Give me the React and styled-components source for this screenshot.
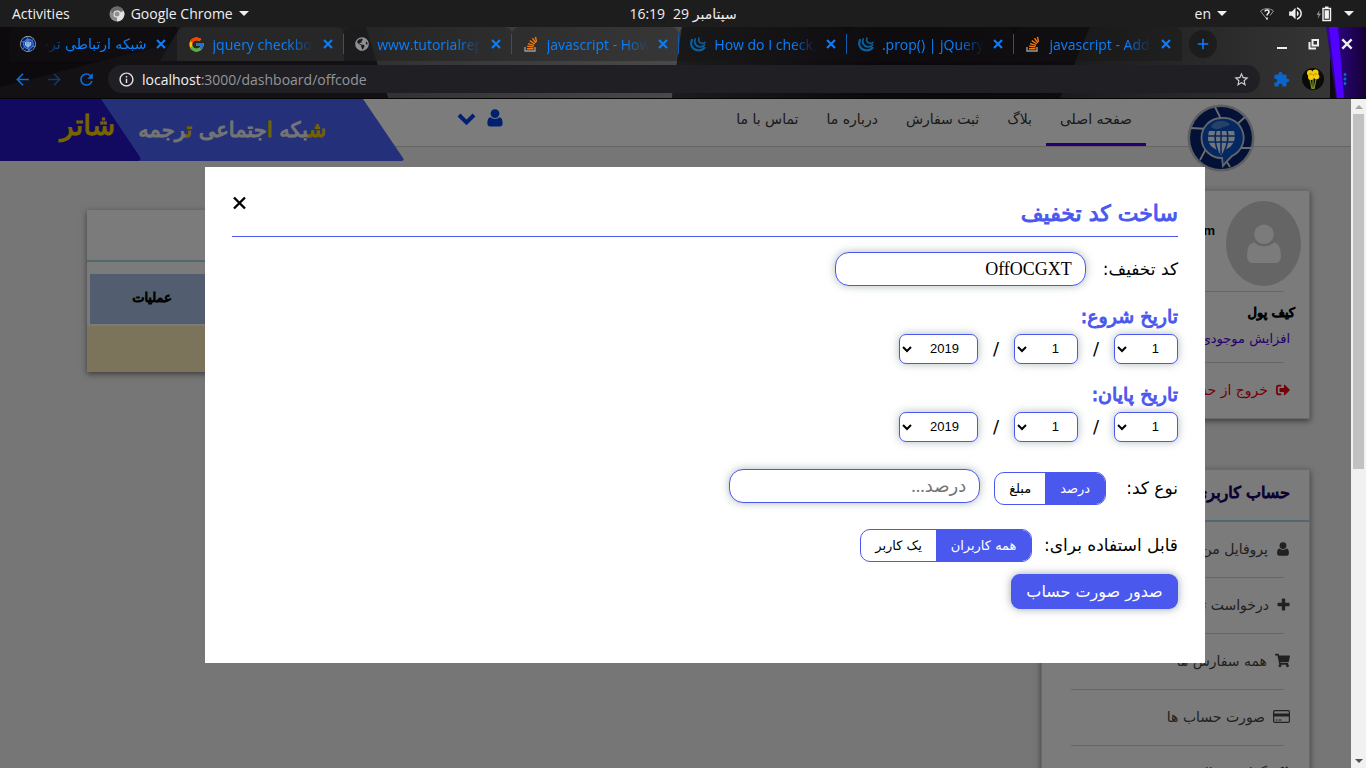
import React from "react";
import styled, { createGlobalStyle, css } from "styled-components";
import {
  MdArrowBack,
  MdArrowForward,
  MdRefresh,
  MdInfoOutline,
  MdStarBorder,
  MdExtension,
  MdMoreVert,
  MdAdd,
  MdVolumeUp,
} from "react-icons/md";
import { FcGoogle } from "react-icons/fc";
import { FaGlobeAmericas, FaShoppingCart, FaSignOutAlt, FaHome } from "react-icons/fa";

const uiFont = `"Open Sans", "Noto Sans", "DejaVu Sans", sans-serif`;
const faFont = `"DejaVu Sans", sans-serif`;
const accent = "#4b58ee";

const GlobalStyle = createGlobalStyle`
  * { box-sizing: border-box; }
  body { margin: 0; background: #1d1d1d; }
  button, input, select { margin: 0; }
  h1, h2, h3, p, ul { margin: 0; padding: 0; }
  a { color: inherit; text-decoration: none; }
`;

/* Medium-heavy Persian headings: regular outlines thickened by a stroke. */
const heavy = css`
  font-weight: 400;
  -webkit-text-stroke: 1px currentColor;
`;

const Screen = styled.div`
  display: flex;
  flex-direction: column;
  height: 100vh;
  overflow: hidden;
  font-family: ${uiFont};
`;

/* ---------- desktop bar ---------- */

const DesktopBar = styled.header`
  display: grid;
  grid-template-columns: 1fr auto 1fr;
  align-items: center;
  height: 27px;
  flex: none;
  padding: 0 12px;
  background: #1d1d1d;
  color: #efefef;
  font-size: 14px;
`;

const BarGroup = styled.div`
  display: flex;
  align-items: center;
  justify-content: ${(p) => (p.$end ? "flex-end" : "flex-start")};
  gap: ${(p) => p.$gap}px;
`;

const BarButton = styled.button`
  display: flex;
  align-items: center;
  gap: 6px;
  padding: 0;
  border: 0;
  background: none;
  color: inherit;
  font: inherit;
`;

const Caret = styled.span`
  border: 5px solid transparent;
  border-top-color: currentColor;
  border-bottom-width: 0;
`;

/* ---------- browser window ---------- */

const Chrome = styled.div`
  position: relative;
  flex: none;
  height: 72px;
  background: #0d0a0d;
  border-bottom: 1px solid #050505;
`;

const ThemeArt = styled.svg`
  position: absolute;
  inset: 0;
  width: 100%;
  height: 100%;
`;

const TabStrip = styled.div`
  position: relative;
  display: flex;
  height: 34px;
  padding-left: 9px;
`;

const Tabs = styled.div`
  display: flex;
  flex: 1;
  min-width: 0;
`;

const Tab = styled.div`
  position: relative;
  display: flex;
  align-items: center;
  flex: 1;
  min-width: 0;
  gap: 8px;
  padding: 0 10px 0 11px;
  color: #0a80ff;
  font-size: 14px;
  border-radius: 8px 8px 0 0;
  background: ${(p) => (p.$active ? "rgba(255,255,255,.03)" : "rgba(20,20,22,.35)")};

  svg { flex: none; }
`;

const TabDivider = styled.i`
  position: absolute;
  right: 0;
  top: 7px;
  width: 1px;
  height: 20px;
  background: #0b5cb0;
`;

const TabTitle = styled.span`
  flex: 1;
  overflow: hidden;
  white-space: nowrap;
  direction: ${(p) => (p.$rtl ? "rtl" : "ltr")};
  font-family: ${(p) => (p.$rtl ? faFont : uiFont)};
  mask-image: linear-gradient(${(p) => (p.$rtl ? "to left" : "to right")}, #000 75%, transparent);
`;

const IconButton = styled.button`
  display: inline-flex;
  align-items: center;
  justify-content: center;
  padding: 0;
  border: 0;
  background: none;
  color: ${(p) => p.$color || "#0a80ff"};
`;

const NewTab = styled(IconButton)`
  width: 28px;
  height: 28px;
  margin: 3px 0 0 7px;
  border-radius: 50%;
  background: rgba(16, 16, 18, 0.5);
`;

const WindowControls = styled.div`
  display: flex;
  align-items: center;
  gap: 20px;
  width: 149px;
  justify-content: flex-end;
  padding-right: 12px;
`;

const Toolbar = styled.div`
  position: relative;
  display: flex;
  align-items: center;
  height: 36px;
  padding: 0 12px 0 13px;
`;

const NavButtons = styled.div`
  display: flex;
  gap: 13px;
  margin-right: 12px;
`;

const Address = styled.div`
  display: flex;
  align-items: center;
  flex: 1;
  gap: 7px;
  height: 28px;
  padding: 0 10px;
  border-radius: 14px;
  background: #202024;
  color: #e4e4e6;
  font-size: 14px;
`;

const Url = styled.span`
  flex: 1;
  color: #94959a;
  b { color: #f2f2f2; font-weight: 400; }
`;

const ToolActions = styled.div`
  display: flex;
  align-items: center;
  gap: 12px;
  margin-left: 13px;
`;

/* ---------- web page ---------- */

const Viewport = styled.div`
  display: flex;
  flex: 1;
  min-height: 0;
`;

const Page = styled.div`
  position: relative;
  flex: 1;
  min-width: 0;
  overflow: hidden;
  direction: rtl;
  background: #ececec;
  font-family: ${faFont};
`;

const SiteHeader = styled.header`
  display: flex;
  align-items: flex-start;
  height: 48px;
  padding-right: 96px;
  background: #f8f8f8;
  border-bottom: 1px solid #c8c8c8;
`;

const LogoLink = styled.a`
  margin: 5px 0 0 41px;
  svg { display: block; }
`;

const Nav = styled.nav`
  display: flex;
  flex: 1;
`;

const NavLink = styled.a`
  height: 47px;
  padding: 0 14px;
  line-height: 41px;
  white-space: nowrap;
  font-size: 14px;
  color: #333;
  border-bottom: 3px solid ${(p) => (p.$active ? "#4b00e0" : "transparent")};
`;

const UserMenu = styled.button`
  display: flex;
  align-items: center;
  gap: 10px;
  margin: 10px 0 0 53px;
  padding: 0;
  border: 0;
  background: none;
  color: #0540e0;
`;

const Banner = styled.a`
  position: relative;
  display: flex;
  align-items: center;
  gap: 23px;
  width: 404px;
  height: 62px;
  padding-right: 78px;
  color: #e8e8e8;
  white-space: nowrap;
  svg { position: absolute; inset: 0; }
`;

const Slogan = styled.span`
  ${heavy}
  position: relative;
  font-size: 21px;
  em { color: #e8c400; font-style: normal; }
`;

const Brand = styled.span`
  ${heavy}
  position: relative;
  font-size: 28px;
  line-height: 40px;
  color: #f0c800;
  margin-bottom: 8px;
`;

const Content = styled.div`
  display: flex;
  align-items: flex-start;
  gap: 30px;
  padding: 0 41px 0 87px;
`;

const Sidebar = styled.aside`
  display: flex;
  flex-direction: column;
  gap: 50px;
  width: 269px;
  padding-top: 43px;
`;

const Card = styled.section`
  background: #f6f6f6;
  border: 1px solid #d4d4d4;
  box-shadow: 0 2px 6px rgba(0, 0, 0, 0.5);
`;

const ProfileTop = styled.div`
  display: flex;
  gap: 11px;
  height: 100px;
  padding: 10px 8px 0 0;
`;

const Avatar = styled.div`
  display: flex;
  align-items: center;
  justify-content: center;
  width: 75px;
  height: 85px;
  border-radius: 50%;
  background: #cbcbcb;
  color: #f6f6f6;
`;

const Email = styled.span`
  direction: ltr;
  padding-top: 22px;
  font: 700 13px "Liberation Sans", sans-serif;
  color: #000;
`;

const Rule = styled.hr`
  height: 1px;
  margin: 0 25px 0 29px;
  border: 0;
  background: #cfcfcf;
`;

const Wallet = styled.div`
  height: 70px;
  padding: 8px 14px 0 0;
  font-size: 13px;
  line-height: 26px;
  a { display: block; padding-right: 5px; color: #4a00d8; }
`;

const WalletTitle = styled.b`
  ${heavy}
`;

const SideLink = styled.a`
  display: flex;
  align-items: center;
  gap: 8px;
  height: 55px;
  padding: 0 19px 2px;
  font-size: 14px;
  white-space: nowrap;
  color: ${(p) => (p.$danger ? "#e80010" : "#424242")};
  svg { flex: none; }
`;

const CardTitle = styled.h2`
  ${heavy}
  height: 52px;
  padding-right: 19px;
  line-height: 46px;
  font-size: 16px;
  color: #1a0066;
  border-bottom: 2px solid #9fd3de;
`;

const TableCard = styled(Card)`
  flex: 1;
  min-width: 0;
  margin-top: 63px;
  border: 0;
`;

const Table = styled.table`
  width: calc(100% - 6px);
  margin: 12px 3px 2px;
  border-collapse: collapse;
  table-layout: fixed;
`;

const HeadCell = styled.th`
  ${heavy}
  width: ${(p) => (p.$last ? "124px" : "auto")};
  height: 50px;
  padding: 0 0 3px;
  background: #a5bbde;
  font-size: 13px;
  color: #000;
`;

const EmptyRow = styled.div`
  height: 46px;
  background: #f6e7b5;
`;

/* ---------- dialog ---------- */

const Backdrop = styled.div`
  position: absolute;
  inset: 0;
  padding: 68px 146px 0 205px;
  background: rgba(0, 0, 0, 0.5);
`;

const Dialog = styled.form`
  min-height: 496px;
  padding: 27px;
  background: #fff;
  color: #000;
`;

const DialogHead = styled.div`
  display: flex;
  justify-content: space-between;
  align-items: flex-start;
  height: 43px;
  margin-bottom: 15px;
  border-bottom: 1px solid ${accent};
`;

const Title = styled.h1`
  ${heavy}
  font-size: 22px;
  line-height: 40px;
  color: ${accent};
`;

const FieldRow = styled.div`
  display: flex;
  align-items: ${(p) => p.$align || "center"};
  gap: ${(p) => p.$gap || 14}px;
  margin-top: ${(p) => p.$top || 0}px;
`;

const Label = styled.label`
  font-size: 17px;
  line-height: 34px;
  white-space: nowrap;
`;

const box = css`
  border: 1px solid ${accent};
  background: #fff;
  box-shadow: 0 0 8px rgba(60, 80, 90, 0.4);
`;

const TextInput = styled.input`
  ${box}
  width: 251px;
  height: 34px;
  padding: 0 13px;
  border-radius: 14px;
  font-family: "Liberation Serif", "DejaVu Sans", serif;
  font-size: 18px;
  color: #000;
  &::placeholder { color: #757575; }
`;

const DateTitle = styled.h3`
  ${heavy}
  margin: 16px 0 4px;
  font-size: 19px;
  line-height: 28px;
  color: ${accent};
`;

const Slash = styled.span`
  width: 8px;
  text-align: center;
  font-size: 18px;
  line-height: 30px;
`;

const Select = styled.select`
  ${box}
  width: ${(p) => (p.$wide ? 79 : 64)}px;
  height: 30px;
  padding: 0 14px 1px 0;
  border-radius: 7px;
  font-family: "Liberation Sans", sans-serif;
  font-size: 13px;
  color: #000;
`;

const Toggle = styled.div`
  display: flex;
  height: 33px;
  overflow: hidden;
  border: 1px solid ${accent};
  border-radius: 10px;
`;

const ToggleOption = styled.label`
  position: relative;
  display: flex;
  align-items: center;
  justify-content: center;
  width: ${(p) => p.$width}px;
  font-size: 13px;
  white-space: nowrap;
  &:has(input:checked) { background: ${accent}; color: #fff; }
  input { position: absolute; inset: 0; width: 100%; height: 100%; margin: 0; opacity: 0; }
`;

const Submit = styled.button`
  display: block;
  height: 35px;
  min-width: 167px;
  margin-top: 12px;
  padding: 0 13px;
  border: 0;
  border-radius: 9px;
  background: ${accent};
  box-shadow: 0 0 8px rgba(60, 80, 90, 0.5);
  color: #fff;
  font-family: ${faFont};
  font-size: 16px;
  line-height: 32px;
  white-space: nowrap;
`;

/* ---------- scrollbar ---------- */

const ScrollBar = styled.div`
  display: flex;
  flex-direction: column;
  align-items: center;
  width: 15px;
  background: #f1f1f1;
`;

const ScrollArrow = styled.i`
  margin: 6px 0 5px;
  border: 4px solid transparent;
  ${(p) =>
    p.$down
      ? css`border-top-color: #505050; border-bottom-width: 0;`
      : css`border-bottom-color: #a3a3a3; border-top-width: 0;`}
`;

const Thumb = styled.div`
  width: 11px;
  height: 53%;
  margin-bottom: auto;
  background: #c1c1c1;
`;

/* ---------- drawings ---------- */

const CrossIcon = ({ size = 12, weight = 2 }) => (
  <svg width={size} height={size} viewBox="0 0 12 12" stroke="currentColor" strokeWidth={weight}>
    <path d="M2 2l8 8M10 2l-8 8" />
  </svg>
);

const UserIcon = ({ size = 18 }) => (
  <svg width={size} height={size} viewBox="0 0 18 18" fill="currentColor">
    <circle cx="9" cy="4.6" r="4.4" />
    <path d="M4.6 8.3C2 8.6 1.4 11.4 1.4 14.6c0 1.9 1.1 3 2.8 3h9.6c1.7 0 2.8-1.1 2.8-3 0-3.2-.6-6-3.2-6.3C12.300 9.400 10.700 10 9 10s-3.300-.6-4.400-1.700z" />
  </svg>
);

const ChevronIcon = () => (
  <svg width="19" height="18" viewBox="0 0 19 18" fill="none" stroke="currentColor" strokeWidth="4">
    <path d="M2 6l7.500 7.500L17 6" />
  </svg>
);

const PlusIcon = () => (
  <svg width="13" height="13" viewBox="0 0 13 13" fill="currentColor">
    <path d="M5.500 .5h2q.7 0 .7.700v3.600h3.600q.7 0 .7.700v2q0 .7-.7.700H8.200v3.600q0 .7-.7.700h-2q-.7 0-.7-.7V8.200H1.200q-.7 0-.7-.7v-2q0-.7.7-.7h3.600V1.200q0-.7.700-.7z" />
  </svg>
);

const CardIcon = () => (
  <svg width="17" height="13" viewBox="0 0 17 13">
    <rect x=".6" y=".6" width="15.800" height="11.800" rx="1.200" fill="none" stroke="currentColor" strokeWidth="1.200" />
    <path d="M1 3.500h15v3H1zM2.500 9.500h2v1h-2zM5.500 9.500h3v1h-3z" fill="currentColor" />
  </svg>
);

const StackIcon = () => (
  <svg width="16" height="16" viewBox="0 0 16 16" fill="none">
    <path d="M2 11v4h10v-4" stroke="#9a9a9a" strokeWidth="1.400" />
    <path d="M4 12.800h6.500M4.200 10.300l6.400.6M5 7.600l6 1.800M6.800 4.700l5 3.300M9.500 2.200l3.300 4.600M12.500 .8l1 5" stroke="#f47a10" strokeWidth="1.400" />
  </svg>
);

const SiteLogo = ({ size = 68 }) => (
  <svg width={size} height={size} viewBox="0 0 68 68">
    <circle cx="34" cy="34" r="33.500" fill="#b8bcc2" />
    <circle cx="34" cy="34" r="31" fill="#05236a" />
    <g stroke="#d4dae2" strokeWidth="1.800">
      <path d="M28 3l8 16M58 13L46 24M65 44H50M43 63l-8-13M13 56l8-15M4 24l17 1" />
    </g>
    <path d="M34 14a20 20 0 1 0 1 40l1 8c3-4 6-7 9-10A20 20 0 0 0 34 14z" fill="#0a50c4" stroke="#c4ccd6" strokeWidth="1.800" />
    <path d="M24 23c2-5 6-6 10-6s8 1 9 4c-4 2-6 1-9 3s-7 1-10-1z" fill="#4d84cc" />
    <path d="M22 27h25c2 8 0 12-4 16l-5 3-4 5-4-5-5-3c-4-4-5-8-3-16z" fill="#e6eef6" />
    <path d="M20 32h29M20 38h28M29 26c-2 8-1 14 2 22M40 26c2 8 1 14-3 22M34 26v24" fill="none" stroke="#0a50c4" strokeWidth="1.600" />
  </svg>
);

const JqueryIcon = () => (
  <svg width="16" height="16" viewBox="0 0 16 16" fill="none" stroke="#0b5f9e" strokeLinecap="round">
    <path d="M2 4C-.3 8.500 2.500 14 8 14.400c3 .2 5-.8 6.500-2.600" strokeWidth="2.200" />
    <path d="M5.200 3C3.600 6.500 5.500 10.300 9.500 10.800c2.300.2 4-.5 5-1.800" strokeWidth="1.800" />
    <path d="M9 2C8.200 4.400 9 6.800 11.500 7.300c1.400.2 2.600-.2 3.500-1" strokeWidth="1.600" />
  </svg>
);

const ChromeIcon = () => (
  <svg width="16" height="16" viewBox="0 0 16 16">
    <circle cx="8" cy="8" r="7.500" fill="#8b8b8b" />
    <path d="M8 8L14.800 5A7.500 7.500 0 0 1 8 15.500z" fill="#e2e2e2" />
    <path d="M8 4.500h6.700A7.500 7.500 0 0 0 1.500 4.300L5 10z" fill="#6a6a6a" />
    <circle cx="8" cy="8" r="3.600" fill="#e8e8e8" />
    <circle cx="8" cy="8" r="2.500" fill="#8f8f8f" />
  </svg>
);

const WifiIcon = () => (
  <svg width="16" height="14" viewBox="0 0 16 14" fill="none" stroke="#9a9a9a">
    <path d="M8 12.500L1.500 4C5 1 11 1 14.500 4L11 8.500" />
    <path d="M6 4.500c.3-2 4-2 4 .2C10 6.500 8 6.500 8 8.500M8 10.500v2" stroke="#f2f2f2" strokeWidth="1.600" />
  </svg>
);

const BatteryIcon = () => (
  <svg width="16" height="16" viewBox="0 0 16 16">
    <path d="M3.500 4L.5 9h2l-.8 4L5 7.500H3z" fill="#8e8e8e" />
    <path d="M7 2.500h7.500v12H7z" fill="none" stroke="#f2f2f2" strokeWidth="1.400" />
    <path d="M9 .5h3.500v2H9zM8.600 4.200h4.300v8.600H8.600z" fill="#f2f2f2" />
  </svg>
);

const ProfilePhoto = () => (
  <svg width="22" height="22" viewBox="0 0 22 22">
    <circle cx="11" cy="11" r="11" fill="#0b0b06" />
    <path d="M8 11l2 10M11 11v10M14 11l-2 10" stroke="#84902a" strokeWidth="1.200" />
    <g fill="#f2cf0a">
      <circle cx="8" cy="5" r="3" />
      <circle cx="13.500" cy="4.500" r="3" />
      <circle cx="14.500" cy="8.500" r="2.800" />
      <circle cx="9" cy="9" r="3" />
    </g>
    <g fill="#d99b00">
      <circle cx="8.500" cy="6" r="1.200" />
      <circle cx="13.500" cy="6" r="1.200" />
    </g>
  </svg>
);

const Theme = () => (
  <ThemeArt viewBox="0 0 1366 71" preserveAspectRatio="none" aria-hidden="true">
    <defs>
      <linearGradient id="mid" x1="0" x2="1">
        <stop offset="0" stopColor="#303030" />
        <stop offset="1" stopColor="#4a4a4a" />
      </linearGradient>
      <linearGradient id="dark" x1="0" x2="1">
        <stop offset="0" stopColor="#1c1c1c" />
        <stop offset=".5" stopColor="#0c080c" />
        <stop offset="1" stopColor="#0f0c0f" />
      </linearGradient>
      <linearGradient id="right" x1="0" x2="1">
        <stop offset="0" stopColor="#1b1b1b" />
        <stop offset="1" stopColor="#353535" />
      </linearGradient>
      <linearGradient id="violet" x1="0" x2="1">
        <stop offset="0" stopColor="#34069c" />
        <stop offset="1" stopColor="#150033" />
      </linearGradient>
    </defs>
    <path d="M0 60L180 14 176 0h210v71H0z" fill="#141114" />
    <path d="M180 0h200v34H160z" fill="#212021" />
    <path d="M366 0h316l-10 71H388z" fill="url(#mid)" />
    <path d="M682 0h420l-40 71H672z" fill="url(#dark)" />
    <path d="M1090 0h240v71h-270z" fill="url(#right)" />
    <path d="M1326 0h40v71h-30z" fill="url(#violet)" />
    <path d="M1329 0h9l6 71h-7z" fill="#5200ff" />
  </ThemeArt>
);

/* ---------- data ---------- */

const tabs = [
  { title: "شبکه ارتباطی ترجمه", rtl: true, icon: <SiteLogo size={16} /> },
  { title: "jquery checkbox checked", active: true, icon: <FcGoogle size={17} /> },
  { title: "www.tutorialrepublic", icon: <FaGlobeAmericas size={14} color="#8f9094" /> },
  { title: "javascript - How do I", icon: <StackIcon /> },
  { title: "How do I check, if", icon: <JqueryIcon /> },
  { title: ".prop() | jQuery API", icon: <JqueryIcon /> },
  { title: "javascript - Add check", icon: <StackIcon /> },
];

const navItems = ["صفحه اصلی", "بلاگ", "ثبت سفارش", "درباره ما", "تماس با ما"];

const menuItems = [
  { text: "پروفایل من", icon: <UserIcon size={14} /> },
  { text: "درخواست ترجمه", icon: <PlusIcon /> },
  { text: "همه سفارش ها", icon: <FaShoppingCart size={15} /> },
  { text: "صورت حساب ها", icon: <CardIcon /> },
  { text: "گزارش مالی", icon: <FaHome size={15} /> },
];

const days = Array.from({ length: 31 }, (_, i) => i + 1);
const months = days.slice(0, 12);
const years = [2019, 2020, 2021, 2022];

const Options = ({ list }) => list.map((n) => <option key={n}>{n}</option>);

function DateField({ title, name }) {
  return (
    <>
      <DateTitle>{title}</DateTitle>
      <FieldRow>
        <Select name={`${name}-day`} aria-label={`${title} روز`}><Options list={days} /></Select>
        <Slash>/</Slash>
        <Select name={`${name}-month`} aria-label={`${title} ماه`}><Options list={months} /></Select>
        <Slash>/</Slash>
        <Select $wide name={`${name}-year`} aria-label={`${title} سال`}><Options list={years} /></Select>
      </FieldRow>
    </>
  );
}

function Choice({ name, options }) {
  return (
    <Toggle role="radiogroup">
      {options.map(([text, width], i) => (
        <ToggleOption key={text} $width={width}>
          <input type="radio" name={name} defaultChecked={i === 0} />
          {text}
        </ToggleOption>
      ))}
    </Toggle>
  );
}

function BrowserChrome() {
  return (
    <Chrome>
      <Theme />
      <TabStrip>
        <Tabs>
          {tabs.map((t, i) => (
            <Tab key={t.title} $active={t.active}>
              {t.icon}
              <TabTitle $rtl={t.rtl}>{t.title}</TabTitle>
              <IconButton aria-label="Close tab"><CrossIcon /></IconButton>
              {i > 0 && i < 6 && <TabDivider />}
            </Tab>
          ))}
        </Tabs>
        <NewTab aria-label="New tab"><MdAdd size={18} /></NewTab>
        <WindowControls>
          <IconButton $color="#eee" aria-label="Minimize">
            <svg width="12" height="12"><path d="M1 9h10v2H1z" fill="currentColor" /></svg>
          </IconButton>
          <IconButton $color="#eee" aria-label="Restore">
            <svg width="12" height="12" fill="none" stroke="currentColor" strokeWidth="2">
              <path d="M4.500 2H10v5.500H4.500zM1.500 4v6.500H8" />
            </svg>
          </IconButton>
          <IconButton $color="#eee" aria-label="Close window"><CrossIcon size={14} /></IconButton>
        </WindowControls>
      </TabStrip>
      <Toolbar>
        <NavButtons>
          <IconButton $color="#0a6fdc" aria-label="Back"><MdArrowBack size={19} /></IconButton>
          <IconButton $color="#0b3a6c" aria-label="Forward"><MdArrowForward size={19} /></IconButton>
          <IconButton $color="#0a6fdc" aria-label="Reload"><MdRefresh size={19} /></IconButton>
        </NavButtons>
        <Address>
          <MdInfoOutline size={17} />
          <Url><b>localhost</b>:3000/dashboard/offcode</Url>
          <IconButton $color="#d0d0d2" aria-label="Bookmark"><MdStarBorder size={17} /></IconButton>
        </Address>
        <ToolActions>
          <IconButton $color="#0a66cc" aria-label="Extensions"><MdExtension size={17} /></IconButton>
          <IconButton aria-label="Profile"><ProfilePhoto /></IconButton>
          <IconButton $color="#0a66cc" aria-label="Menu"><MdMoreVert size={18} /></IconButton>
        </ToolActions>
      </Toolbar>
    </Chrome>
  );
}

export default function App() {
  return (
    <Screen>
      <GlobalStyle />
      <DesktopBar>
        <BarGroup $gap={39}>
          <BarButton>Activities</BarButton>
          <BarButton><ChromeIcon />Google Chrome<Caret /></BarButton>
        </BarGroup>
        <BarGroup $gap={8}>
          <span>16:19</span>
          <span dir="rtl">سپتامبر 29</span>
        </BarGroup>
        <BarGroup $end $gap={32}>
          <BarButton>en<Caret /></BarButton>
          <BarGroup $gap={12}>
            <WifiIcon />
            <MdVolumeUp size={17} />
            <BatteryIcon />
            <Caret />
          </BarGroup>
        </BarGroup>
      </DesktopBar>

      <BrowserChrome />

      <Viewport>
        <Page lang="fa">
          <SiteHeader>
            <LogoLink href="#" aria-label="شاتر"><SiteLogo /></LogoLink>
            <Nav>
              {navItems.map((t, i) => <NavLink key={t} href="#" $active={i === 0}>{t}</NavLink>)}
            </Nav>
            <UserMenu aria-label="حساب کاربری">
              <UserIcon size={18} />
              <ChevronIcon />
            </UserMenu>
            <Banner href="#">
              <svg width="404" height="62" viewBox="0 0 404 62" aria-hidden="true">
                <path d="M90 0h273l40 59q2 3-2 3H90z" fill="#4861f4" />
                <path d="M0 0h101l39 58q2 4-3 4H0z" fill="#2412c0" />
              </svg>
              <Slogan><em>ش</em>بکه <em>ا</em>جتماعی <em>ت</em>رجمه</Slogan>
              <Brand>شاتر</Brand>
            </Banner>
          </SiteHeader>

          <Content>
            <Sidebar>
              <Card>
                <ProfileTop>
                  <Avatar><UserIcon size={40} /></Avatar>
                  <Email>user@gmail.com</Email>
                </ProfileTop>
                <Rule />
                <Wallet>
                  <WalletTitle>کیف پول</WalletTitle>
                  <a href="#">افزایش موجودی</a>
                </Wallet>
                <Rule />
                <SideLink href="#" $danger><FaSignOutAlt size={14} />خروج از حساب</SideLink>
              </Card>
              <Card>
                <CardTitle>حساب کاربری</CardTitle>
                {menuItems.map((m) => (
                  <React.Fragment key={m.text}>
                    <SideLink href="#">{m.icon}{m.text}</SideLink>
                    <Rule />
                  </React.Fragment>
                ))}
              </Card>
            </Sidebar>

            <TableCard>
              <CardTitle as="div" />
              <Table>
                <thead>
                  <tr>
                    <HeadCell>کد</HeadCell>
                    <HeadCell>نوع</HeadCell>
                    <HeadCell>شروع</HeadCell>
                    <HeadCell>پایان</HeadCell>
                    <HeadCell $last>عملیات</HeadCell>
                  </tr>
                </thead>
              </Table>
              <EmptyRow />
            </TableCard>
          </Content>

          <Backdrop>
            <Dialog role="dialog" aria-labelledby="dialog-title">
              <DialogHead>
                <Title id="dialog-title">ساخت کد تخفیف</Title>
                <IconButton type="button" $color="#000" aria-label="بستن">
                  <svg width="15" height="18" viewBox="0 0 15 18" stroke="currentColor" strokeWidth="2.400">
                    <path d="M2 3.500l11 11M13 3.500L2 14.500" />
                  </svg>
                </IconButton>
              </DialogHead>

              <FieldRow $gap={17}>
                <Label htmlFor="code">کد تخفیف:</Label>
                <TextInput id="code" defaultValue="OffOCGXT" />
              </FieldRow>

              <DateField title="تاریخ شروع:" name="start" />
              <DateField title="تاریخ پایان:" name="end" />

              <FieldRow $top={27} $align="flex-start">
                <FieldRow $gap={20} $top={2}>
                  <Label htmlFor="amount">نوع کد:</Label>
                  <Choice name="kind" options={[["درصد", 60], ["مبلغ", 50]]} />
                </FieldRow>
                <TextInput id="amount" placeholder="درصد..." />
              </FieldRow>

              <FieldRow $gap={12} $top={23}>
                <Label as="span">قابل استفاده برای:</Label>
                <Choice name="scope" options={[["همه کاربران", 95], ["یک کاربر", 75]]} />
              </FieldRow>

              <Submit type="button">صدور صورت حساب</Submit>
            </Dialog>
          </Backdrop>
        </Page>
        <ScrollBar>
          <ScrollArrow />
          <Thumb />
          <ScrollArrow $down />
        </ScrollBar>
      </Viewport>
    </Screen>
  );
}
